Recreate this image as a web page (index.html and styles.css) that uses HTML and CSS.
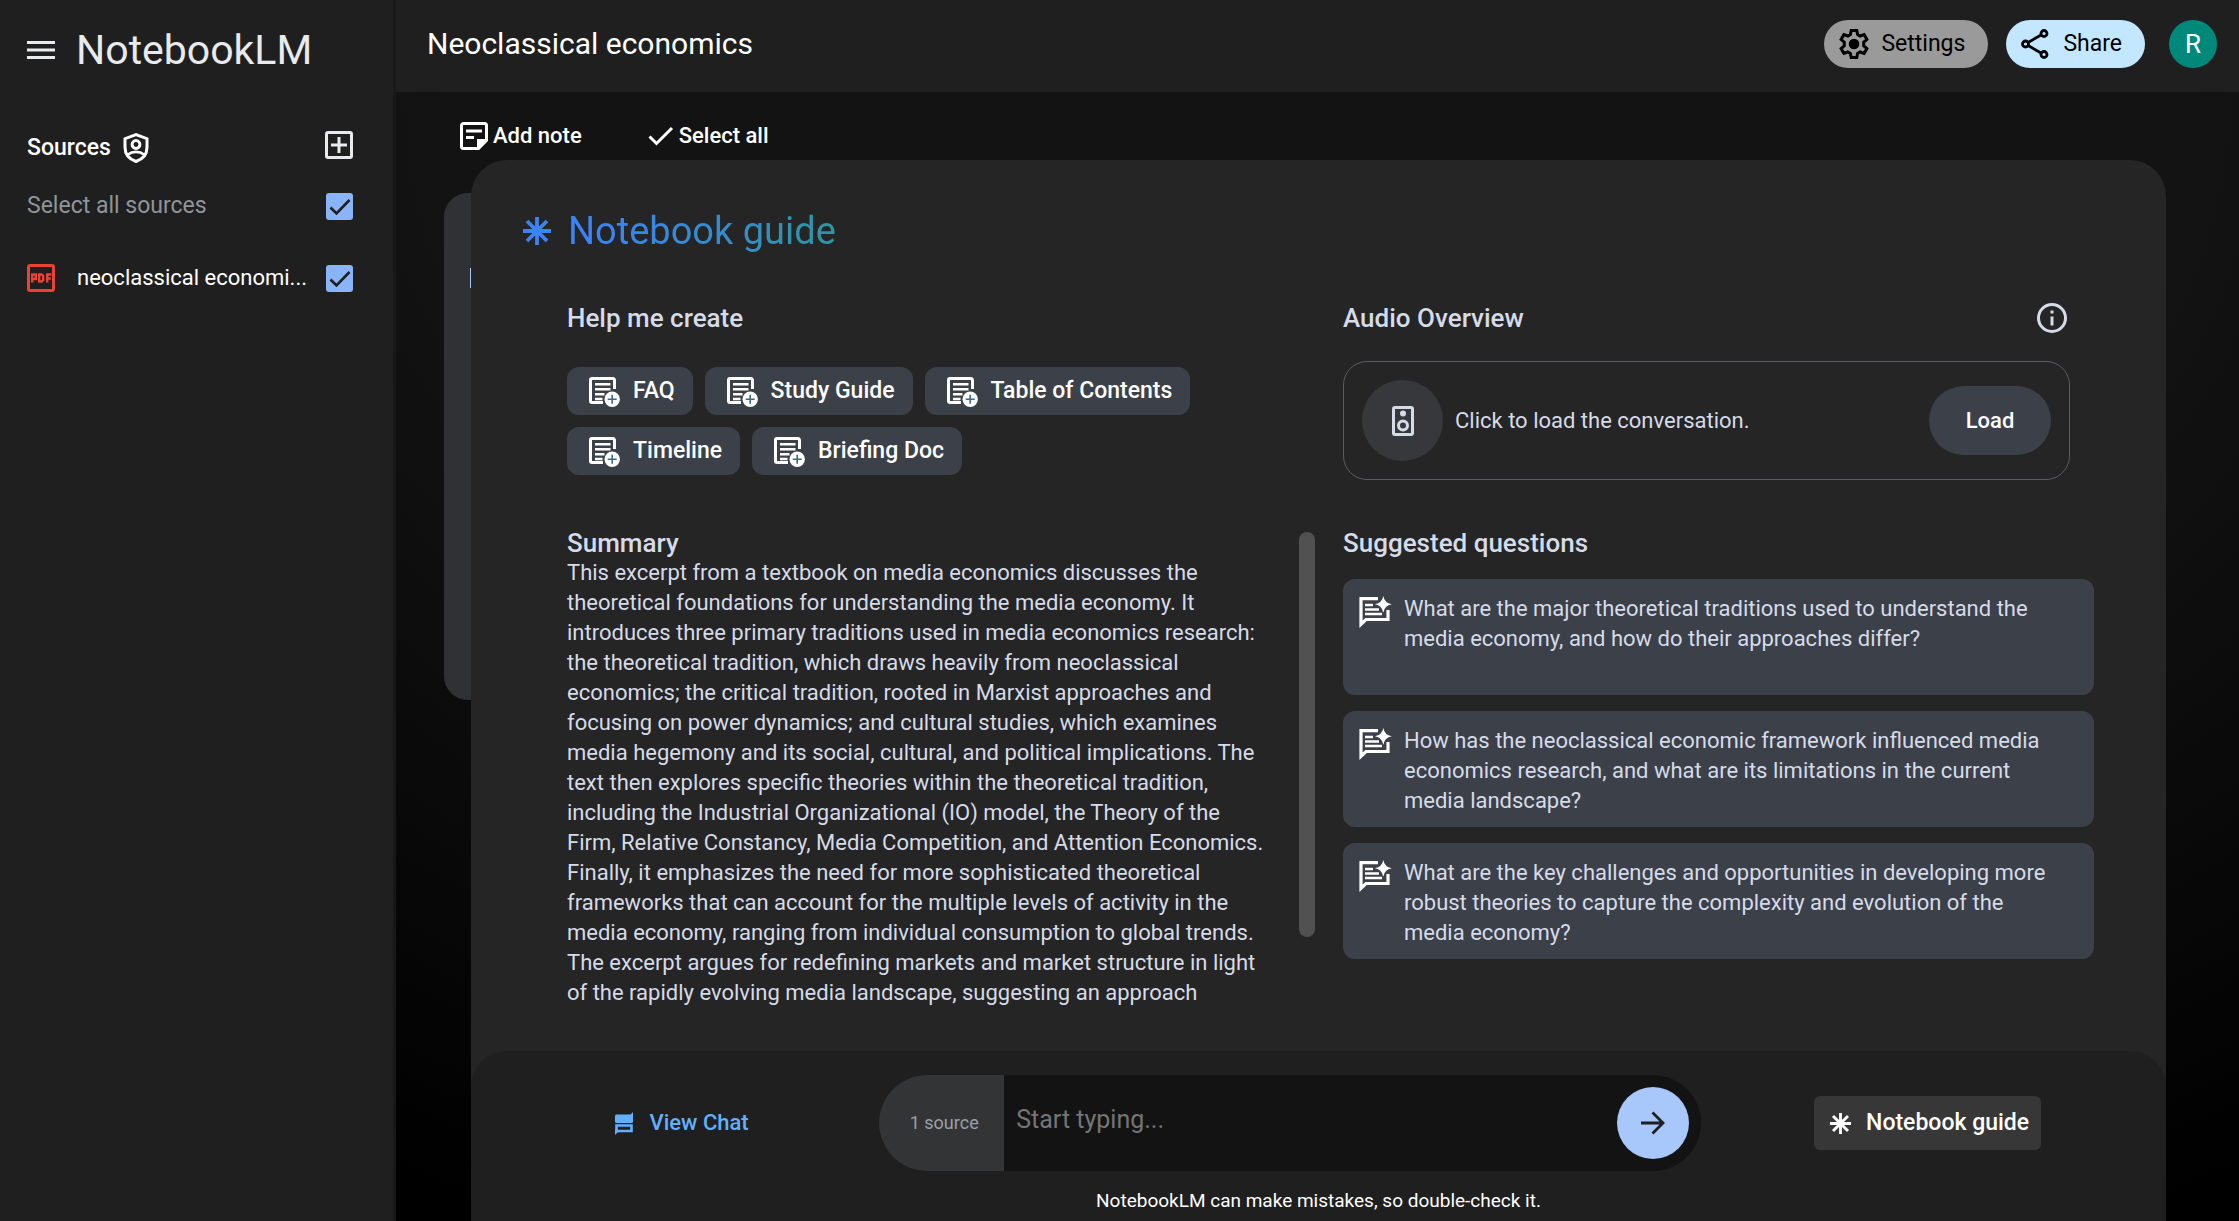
FILE: index.html
```html
<!DOCTYPE html>
<html lang="en">
<head>
    <meta charset="UTF-8">
    <meta name="viewport" content="width=device-width, initial-scale=1.0">
    <title>NotebookLM</title>
    <link rel="stylesheet" href="styles.css">
</head>
<body>
    <!-- Shared icons -->
    <svg class="sprite" aria-hidden="true">
        <symbol id="icon-star" viewBox="0 0 28 28">
            <path d="M14 0v28M0 14h28M4 4l20 20M24 4L4 24" fill="none" stroke="currentColor" stroke-width="3.8"/>
        </symbol>
        <symbol id="icon-doc" viewBox="0 0 32 32">
            <path d="M26.500 14V5a1.500 1.500 0 0 0-1.500-1.500H4A1.500 1.500 0 0 0 2.500 5v21A1.500 1.500 0 0 0 4 27.500H15" fill="none" stroke="currentColor" stroke-width="3"/>
            <path d="M7 9.300h15.500M7 14.300h15.500M7 19.300h9.500M7 24h7.500" stroke="currentColor" stroke-width="2.500"/>
            <circle cx="24.200" cy="24.200" r="7.700" fill="currentColor"/>
            <path d="M24.200 19.700v9M19.700 24.200h9" stroke="#3c6a80" stroke-width="1.600"/>
        </symbol>
        <symbol id="icon-question" viewBox="0 0 33 32">
            <path d="M19 2.700H2v25.500l5-4.700H29V14" fill="none" stroke="currentColor" stroke-width="3.200"/>
            <path d="M6 9h8M6 13.500h14M6 18h17" stroke="currentColor" stroke-width="2.600"/>
            <path d="M24.300 0q1.200 7 8.500 8.200q-7.300 1.200-8.500 8.500q-1.200-7.300-8.500-8.500q7.300-1.200 8.500-8.200z" fill="currentColor"/>
        </symbol>
    </svg>

    <aside class="sidebar">
        <div class="brand">
            <button class="icon-btn" aria-label="Menu">
                <svg width="28" height="18" viewBox="0 0 28 18"><path d="M0 1.500h28M0 9h28M0 16.500h28" stroke="#e8eaed" stroke-width="3"/></svg>
            </button>
            <span class="logo">NotebookLM</span>
        </div>

        <div class="sources-head">
            <h2>Sources</h2>
            <svg width="26" height="30" viewBox="0 0 26 30">
                <path d="M13 1.700L2 5.700v8.500c0 7 4.500 12 11 14.300c6.500-2.300 11-7.300 11-14.300V5.700z" fill="none" stroke="#fff" stroke-width="3"/>
                <circle cx="13" cy="11.500" r="3.900" fill="none" stroke="#fff" stroke-width="3"/>
                <path d="M5 21.500c2.500-2 5-2.700 8-2.700s5.500.7 8 2.700" fill="none" stroke="#fff" stroke-width="2.800"/>
            </svg>
            <button class="icon-btn add-source" aria-label="Add source">
                <svg width="28" height="28" viewBox="0 0 28 28"><rect x="1.500" y="1.500" width="25" height="25" rx="1.500" fill="none" stroke="#e8eaed" stroke-width="3"/><path d="M14 6v16M6 14h16" stroke="#e8eaed" stroke-width="3"/></svg>
            </button>
        </div>

        <div class="source-row muted">
            <label for="select-all">Select all sources</label>
            <input type="checkbox" id="select-all" checked>
        </div>
        <div class="source-row file">
            <svg width="28" height="28" viewBox="0 0 28 28">
                <rect x="1.500" y="1.500" width="25" height="25" rx="1.500" fill="none" stroke="#ea4335" stroke-width="3"/>
                <path d="M5.200 18.500V10.500h3.600v4.500H5.200M12.200 10.500h2.500l1.500 1.500v4l-1.500 1.500h-2.500zM20.200 18.500v-8h4.300M20.200 14.500h3.500" fill="none" stroke="#ea4335" stroke-width="2.400"/>
            </svg>
            <label for="source-1">neoclassical economi...</label>
            <input type="checkbox" id="source-1" checked>
        </div>
    </aside>

    <div class="main">
        <header class="topbar">
            <h1>Neoclassical economics</h1>
            <button class="pill settings">
                <svg width="30" height="30" viewBox="0 0 30 30">
                    <path d="M12.200 1.500h5.600l.8 4.100 2.500 1.400 4-1.400 2.800 4.800-3.200 2.800v3.600l3.200 2.800-2.800 4.800-4-1.400-2.500 1.400-.8 4.100h-5.600l-.8-4.100-2.500-1.400-4 1.400-2.800-4.800 3.200-2.800v-3.600l-3.200-2.800 2.800-4.800 4 1.400 2.500-1.400z" fill="none" stroke="#000" stroke-width="3"/>
                    <circle cx="15" cy="15" r="5.300"/>
                </svg>
                Settings
            </button>
            <button class="pill share">
                <svg width="30" height="30" viewBox="0 0 30 30" fill="none" stroke="#000" stroke-width="2.800">
                    <path d="M7 13.500L20 6M7 16.500L20 24"/>
                    <circle cx="4.500" cy="15" r="3"/><circle cx="23" cy="4.500" r="3"/><circle cx="23" cy="25.500" r="3"/>
                </svg>
                Share
            </button>
            <button class="avatar">R</button>
        </header>

        <div class="stage">
            <div class="toolbar">
                <button class="tool">
                    <svg width="28" height="28" viewBox="0 0 28 28">
                        <path d="M18.500 26.500H3.500a2 2 0 0 1-2-2v-21a2 2 0 0 1 2-2h21a2 2 0 0 1 2 2v15z" fill="none" stroke="#fff" stroke-width="3"/>
                        <path d="M17 27v-10h10z" fill="#fff"/>
                        <path d="M6 9h16M6 15.500h8" stroke="#fff" stroke-width="2.800"/>
                    </svg>
                    Add note
                </button>
                <button class="tool">
                    <svg width="26" height="20" viewBox="0 0 26 20"><path d="M1.500 10.500l7 7L24 2" fill="none" stroke="#fff" stroke-width="3"/></svg>
                    Select all
                </button>
            </div>

            <div class="note-card"></div>

            <main class="guide">
                <div class="guide-title">
                    <svg width="28" height="28"><use href="#icon-star"/></svg>
                    <h2>Notebook guide</h2>
                </div>

                <div class="guide-grid">
                    <section class="create">
                        <h3>Help me create</h3>
                        <div class="chips">
                            <button class="chip"><svg width="32" height="32"><use href="#icon-doc"/></svg>FAQ</button>
                            <button class="chip"><svg width="32" height="32"><use href="#icon-doc"/></svg>Study Guide</button>
                            <button class="chip"><svg width="32" height="32"><use href="#icon-doc"/></svg>Table of Contents</button>
                            <button class="chip"><svg width="32" height="32"><use href="#icon-doc"/></svg>Timeline</button>
                            <button class="chip"><svg width="32" height="32"><use href="#icon-doc"/></svg>Briefing Doc</button>
                        </div>
                    </section>

                    <section class="audio">
                        <div class="audio-head">
                            <h3>Audio Overview</h3>
                            <button class="icon-btn" aria-label="About audio overview">
                                <svg width="30" height="30" viewBox="0 0 30 30"><circle cx="15" cy="15" r="13.500" fill="none" stroke="#d5dbe8" stroke-width="3"/><path d="M15 13.500v9M15 7.500v3" stroke="#d5dbe8" stroke-width="3"/></svg>
                            </button>
                        </div>
                        <div class="audio-card">
                            <span class="speaker">
                                <svg width="22" height="30" viewBox="0 0 22 30"><rect x="1.500" y="1.500" width="19" height="27" rx="1.500" fill="none" stroke="#d5dbe8" stroke-width="3"/><circle cx="11" cy="7.500" r="3" fill="#d5dbe8"/><circle cx="11" cy="19.500" r="4.500" fill="none" stroke="#d5dbe8" stroke-width="3"/></svg>
                            </span>
                            <p>Click to load the conversation.</p>
                            <button class="load-btn">Load</button>
                        </div>
                    </section>

                    <section class="summary">
                        <div class="summary-text">
                            <h3>Summary</h3>
                            <p>This excerpt from a textbook on media economics discusses the<br>
                            theoretical foundations for understanding the media economy. It<br>
                            introduces three primary traditions used in media economics research:<br>
                            the theoretical tradition, which draws heavily from neoclassical<br>
                            economics; the critical tradition, rooted in Marxist approaches and<br>
                            focusing on power dynamics; and cultural studies, which examines<br>
                            media hegemony and its social, cultural, and political implications. The<br>
                            text then explores specific theories within the theoretical tradition,<br>
                            including the Industrial Organizational (IO) model, the Theory of the<br>
                            Firm, Relative Constancy, Media Competition, and Attention Economics.<br>
                            Finally, it emphasizes the need for more sophisticated theoretical<br>
                            frameworks that can account for the multiple levels of activity in the<br>
                            media economy, ranging from individual consumption to global trends.<br>
                            The excerpt argues for redefining markets and market structure in light<br>
                            of the rapidly evolving media landscape, suggesting an approach</p>
                        </div>
                        <div class="scroll-thumb"></div>
                    </section>

                    <section class="questions">
                        <h3>Suggested questions</h3>
                        <button class="question">
                            <svg width="33" height="32"><use href="#icon-question"/></svg>
                            <span>What are the major theoretical traditions used to understand the<br>media economy, and how do their approaches differ?</span>
                        </button>
                        <button class="question">
                            <svg width="33" height="32"><use href="#icon-question"/></svg>
                            <span>How has the neoclassical economic framework influenced media<br>economics research, and what are its limitations in the current<br>media landscape?</span>
                        </button>
                        <button class="question">
                            <svg width="33" height="32"><use href="#icon-question"/></svg>
                            <span>What are the key challenges and opportunities in developing more<br>robust theories to capture the complexity and evolution of the<br>media economy?</span>
                        </button>
                    </section>
                </div>

                <footer class="chatbar">
                    <div class="chat-side">
                        <button class="view-chat">
                            <svg width="20" height="23" viewBox="0 0 20 23">
                                <path d="M19 0v9.500a1.500 1.500 0 0 1-1.500 1.500H2.500A1.500 1.500 0 0 1 1 9.500V4a1.500 1.500 0 0 1 1.500-1.500h14z" fill="#62b0fb"/>
                                <path d="M2.500 13.500h15v5.500h-15z" fill="none" stroke="#62b0fb" stroke-width="2.600"/>
                                <path d="M1 17v6l3-3z" fill="#62b0fb"/>
                            </svg>
                            View Chat
                        </button>
                    </div>
                    <form class="prompt">
                        <span class="source-count">1 source</span>
                        <input type="text" placeholder="Start typing..." aria-label="Start typing">
                        <button type="button" class="send" aria-label="Send">
                            <svg width="24" height="24" viewBox="0 0 24 24"><path d="M0 12h22M11.500 1.500L22 12L11.500 22.500" fill="none" stroke="#1f1f1f" stroke-width="2.800"/></svg>
                        </button>
                    </form>
                    <div class="chat-side wide">
                        <button class="guide-btn">
                            <svg width="21" height="21"><use href="#icon-star"/></svg>
                            Notebook guide
                        </button>
                    </div>
                    <p class="disclaimer">NotebookLM can make mistakes, so double-check it.</p>
                </footer>
            </main>
        </div>
    </div>
</body>
</html>
```
FILE: styles.css
```css
* {
    box-sizing: border-box;
}
body {
    margin: 0;
    min-height: 100vh;
    display: flex;
    background-color: #131313;
    color: #fff;
    font-family: Roboto, "Liberation Sans", sans-serif;
    font-size: 22px;
    line-height: 30px;
}
h1, h2, h3, p {
    margin: 0;
    font-weight: 500;
}
button, input {
    font: inherit;
    color: inherit;
    border: none;
    padding: 0;
    margin: 0;
    background: none;
}
button {
    cursor: pointer;
}
svg {
    display: block;
    flex-shrink: 0;
}
.sprite {
    position: absolute;
    width: 0;
    height: 0;
}

/* Sidebar */
.sidebar {
    width: 396px;
    flex-shrink: 0;
    background-color: #1f1f1f;
    border-right: 3px solid #181818;
    padding: 20px 40px 20px 27px;
}
.brand {
    display: flex;
    align-items: center;
    gap: 21px;
    height: 60px;
}
.logo {
    font-size: 41px;
    color: #e8eaed;
}
.sources-head {
    display: flex;
    align-items: center;
    gap: 12px;
    height: 60px;
    margin-top: 38px;
}
.sources-head h2 {
    font-size: 23px;
}
.add-source {
    margin: 0 0 6px auto;
}
.source-row {
    display: flex;
    align-items: center;
    justify-content: space-between;
    height: 56px;
}
.file {
    height: 60px;
    margin-top: 14px;
}
.file label {
    flex: 1;
    margin-left: 22px;
}
.muted {
    color: #8f959b;
    font-size: 23px;
}
input[type="checkbox"] {
    appearance: none;
    width: 27px;
    height: 27px;
    border-radius: 3px;
    background: #8ab4f8 url("data:image/svg+xml,%3Csvg xmlns='http://www.w3.org/2000/svg' viewBox='0 0 27 27'%3E%3Cpath d='M4.500 14.500l6 6L23.500 7' fill='none' stroke='%231f1f1f' stroke-width='2.600'/%3E%3C/svg%3E") center / 27px no-repeat;
}

/* Top bar */
.main {
    flex: 1;
    min-width: 0;
    display: flex;
    flex-direction: column;
}
.topbar {
    display: flex;
    align-items: flex-start;
    height: 92px;
    padding: 20px 22px 0 31px;
    background-color: #1f1f1f;
}
.topbar h1 {
    font-size: 30px;
    font-weight: 400;
    line-height: 48px;
    margin-right: auto;
}
.pill {
    display: flex;
    align-items: center;
    gap: 12px;
    height: 48px;
    padding: 0 23px 0 15px;
    border-radius: 24px;
    color: #000;
    font-size: 23px;
}
.settings {
    background-color: #9a9a9a;
}
.share {
    background-color: #c2e7ff;
    margin-left: 18px;
}
.avatar {
    width: 48px;
    height: 48px;
    margin-left: 24px;
    border-radius: 50%;
    background-color: #00897b;
    font-size: 26px;
}

/* Workspace */
.stage {
    flex: 1;
    position: relative;
    display: flex;
    flex-direction: column;
    background: radial-gradient(ellipse 95% 112% at 50% 0, #131313 50%, #000 100%);
}
.toolbar {
    display: flex;
    align-items: center;
    gap: 66px;
    height: 68px;
    padding: 20px 64px 0;
}
.tool {
    display: flex;
    align-items: center;
    gap: 5px;
    height: 48px;
    font-weight: 500;
}
.note-card {
    position: absolute;
    left: 48px;
    top: 101px;
    width: 60px;
    height: 507px;
    border-radius: 24px;
    background: linear-gradient(#a8c7fa, #a8c7fa) 26px 75px / 1px 20px no-repeat #303134;
}
.guide {
    position: relative;
    flex: 1;
    display: flex;
    flex-direction: column;
    margin: 0 73px 0 75px;
    border-radius: 36px 36px 0 0;
    background-color: #252525;
}
.guide-title {
    display: flex;
    align-items: center;
    gap: 17px;
    padding: 49px 52px 0;
    color: #3c83f6;
}
.guide-title h2 {
    font-size: 38px;
    font-weight: 400;
    line-height: 44px;
    background: linear-gradient(90deg, #3c83f6 10%, #2f95a0);
    background-clip: text;
    color: transparent;
}
.guide-grid {
    flex: 1;
    display: grid;
    grid-template-columns: 1fr 1fr;
    grid-template-rows: auto 1fr;
    column-gap: 25px;
    row-gap: 48px;
    padding: 48px 72px 0 96px;
    color: #d5dbe8;
}
.guide-grid h3 {
    font-size: 26px;
}
.create h3, .audio h3 {
    line-height: 34px;
}
.chips {
    display: flex;
    flex-wrap: wrap;
    gap: 12px;
    margin-top: 32px;
}
.chip {
    display: flex;
    align-items: center;
    gap: 13px;
    height: 48px;
    padding: 0 18px 0 21px;
    border-radius: 12px;
    background-color: #3c4049;
    color: #fff;
    font-size: 23px;
    font-weight: 500;
}
.audio {
    padding-right: 24px;
}
.audio-head {
    display: flex;
    justify-content: space-between;
    align-items: center;
    padding-right: 3px;
}
.audio-card {
    display: flex;
    align-items: center;
    margin-top: 26px;
    padding: 18px;
    border: 1px solid #5b5c63;
    border-radius: 24px;
}
.speaker {
    display: flex;
    align-items: center;
    justify-content: center;
    width: 81px;
    height: 81px;
    border-radius: 50%;
    background-color: #37383b;
}
.audio-card p {
    flex: 1;
    margin-left: 12px;
    font-weight: 400;
}
.load-btn {
    width: 122px;
    height: 69px;
    border-radius: 35px;
    background-color: #3c4049;
    color: #fff;
    font-weight: 500;
}
.summary {
    display: flex;
    justify-content: space-between;
    padding-right: 3px;
}
.summary-text {
    white-space: nowrap;
}
.summary p {
    font-weight: 400;
}
.scroll-thumb {
    width: 16px;
    height: 405px;
    margin-top: 4px;
    border-radius: 8px;
    background-color: #515151;
}
.questions h3 {
    margin-bottom: 21px;
}
.question {
    display: flex;
    align-items: flex-start;
    gap: 12px;
    width: 100%;
    min-height: 116px;
    margin-bottom: 16px;
    padding: 15px 16px 11px;
    border-radius: 12px;
    background-color: #3c4049;
    text-align: left;
}
.question svg {
    color: #fff;
    margin-top: 2px;
}

/* Chat bar */
.chatbar {
    display: flex;
    flex-wrap: wrap;
    align-content: flex-start;
    height: 170px;
    padding: 24px 12px 0;
    border-radius: 36px 36px 0 0;
    background-color: #1f1f1f;
}
.chat-side {
    flex: 7;
    display: flex;
    align-items: center;
    justify-content: center;
    height: 96px;
}
.wide {
    flex: 8;
}
.view-chat {
    display: flex;
    align-items: center;
    gap: 16px;
    color: #62b0fb;
    font-weight: 500;
}
.prompt {
    display: flex;
    align-items: center;
    width: 822px;
    height: 96px;
    padding-right: 12px;
    border-radius: 48px;
    overflow: hidden;
    background-color: #131313;
}
.source-count {
    width: 125px;
    padding-left: 5px;
    line-height: 96px;
    font-size: 18px;
    text-align: center;
    background-color: #333436;
    color: #9aa0a6;
}
.prompt input {
    flex: 1;
    padding: 0 12px 6px;
    font-size: 25px;
    line-height: 34px;
}
.prompt input::placeholder {
    color: #757575;
}
.send {
    display: flex;
    align-items: center;
    justify-content: center;
    width: 72px;
    height: 72px;
    border-radius: 50%;
    background-color: #a8c7fa;
}
.disclaimer {
    width: 100%;
    margin-top: 15px;
    font-size: 19px;
    font-weight: 400;
    text-align: center;
}
.guide-btn {
    display: flex;
    align-items: center;
    gap: 15px;
    height: 54px;
    padding: 0 12px 0 16px;
    border-radius: 6px;
    background-color: #373737;
    font-size: 23px;
    font-weight: 500;
}
```
